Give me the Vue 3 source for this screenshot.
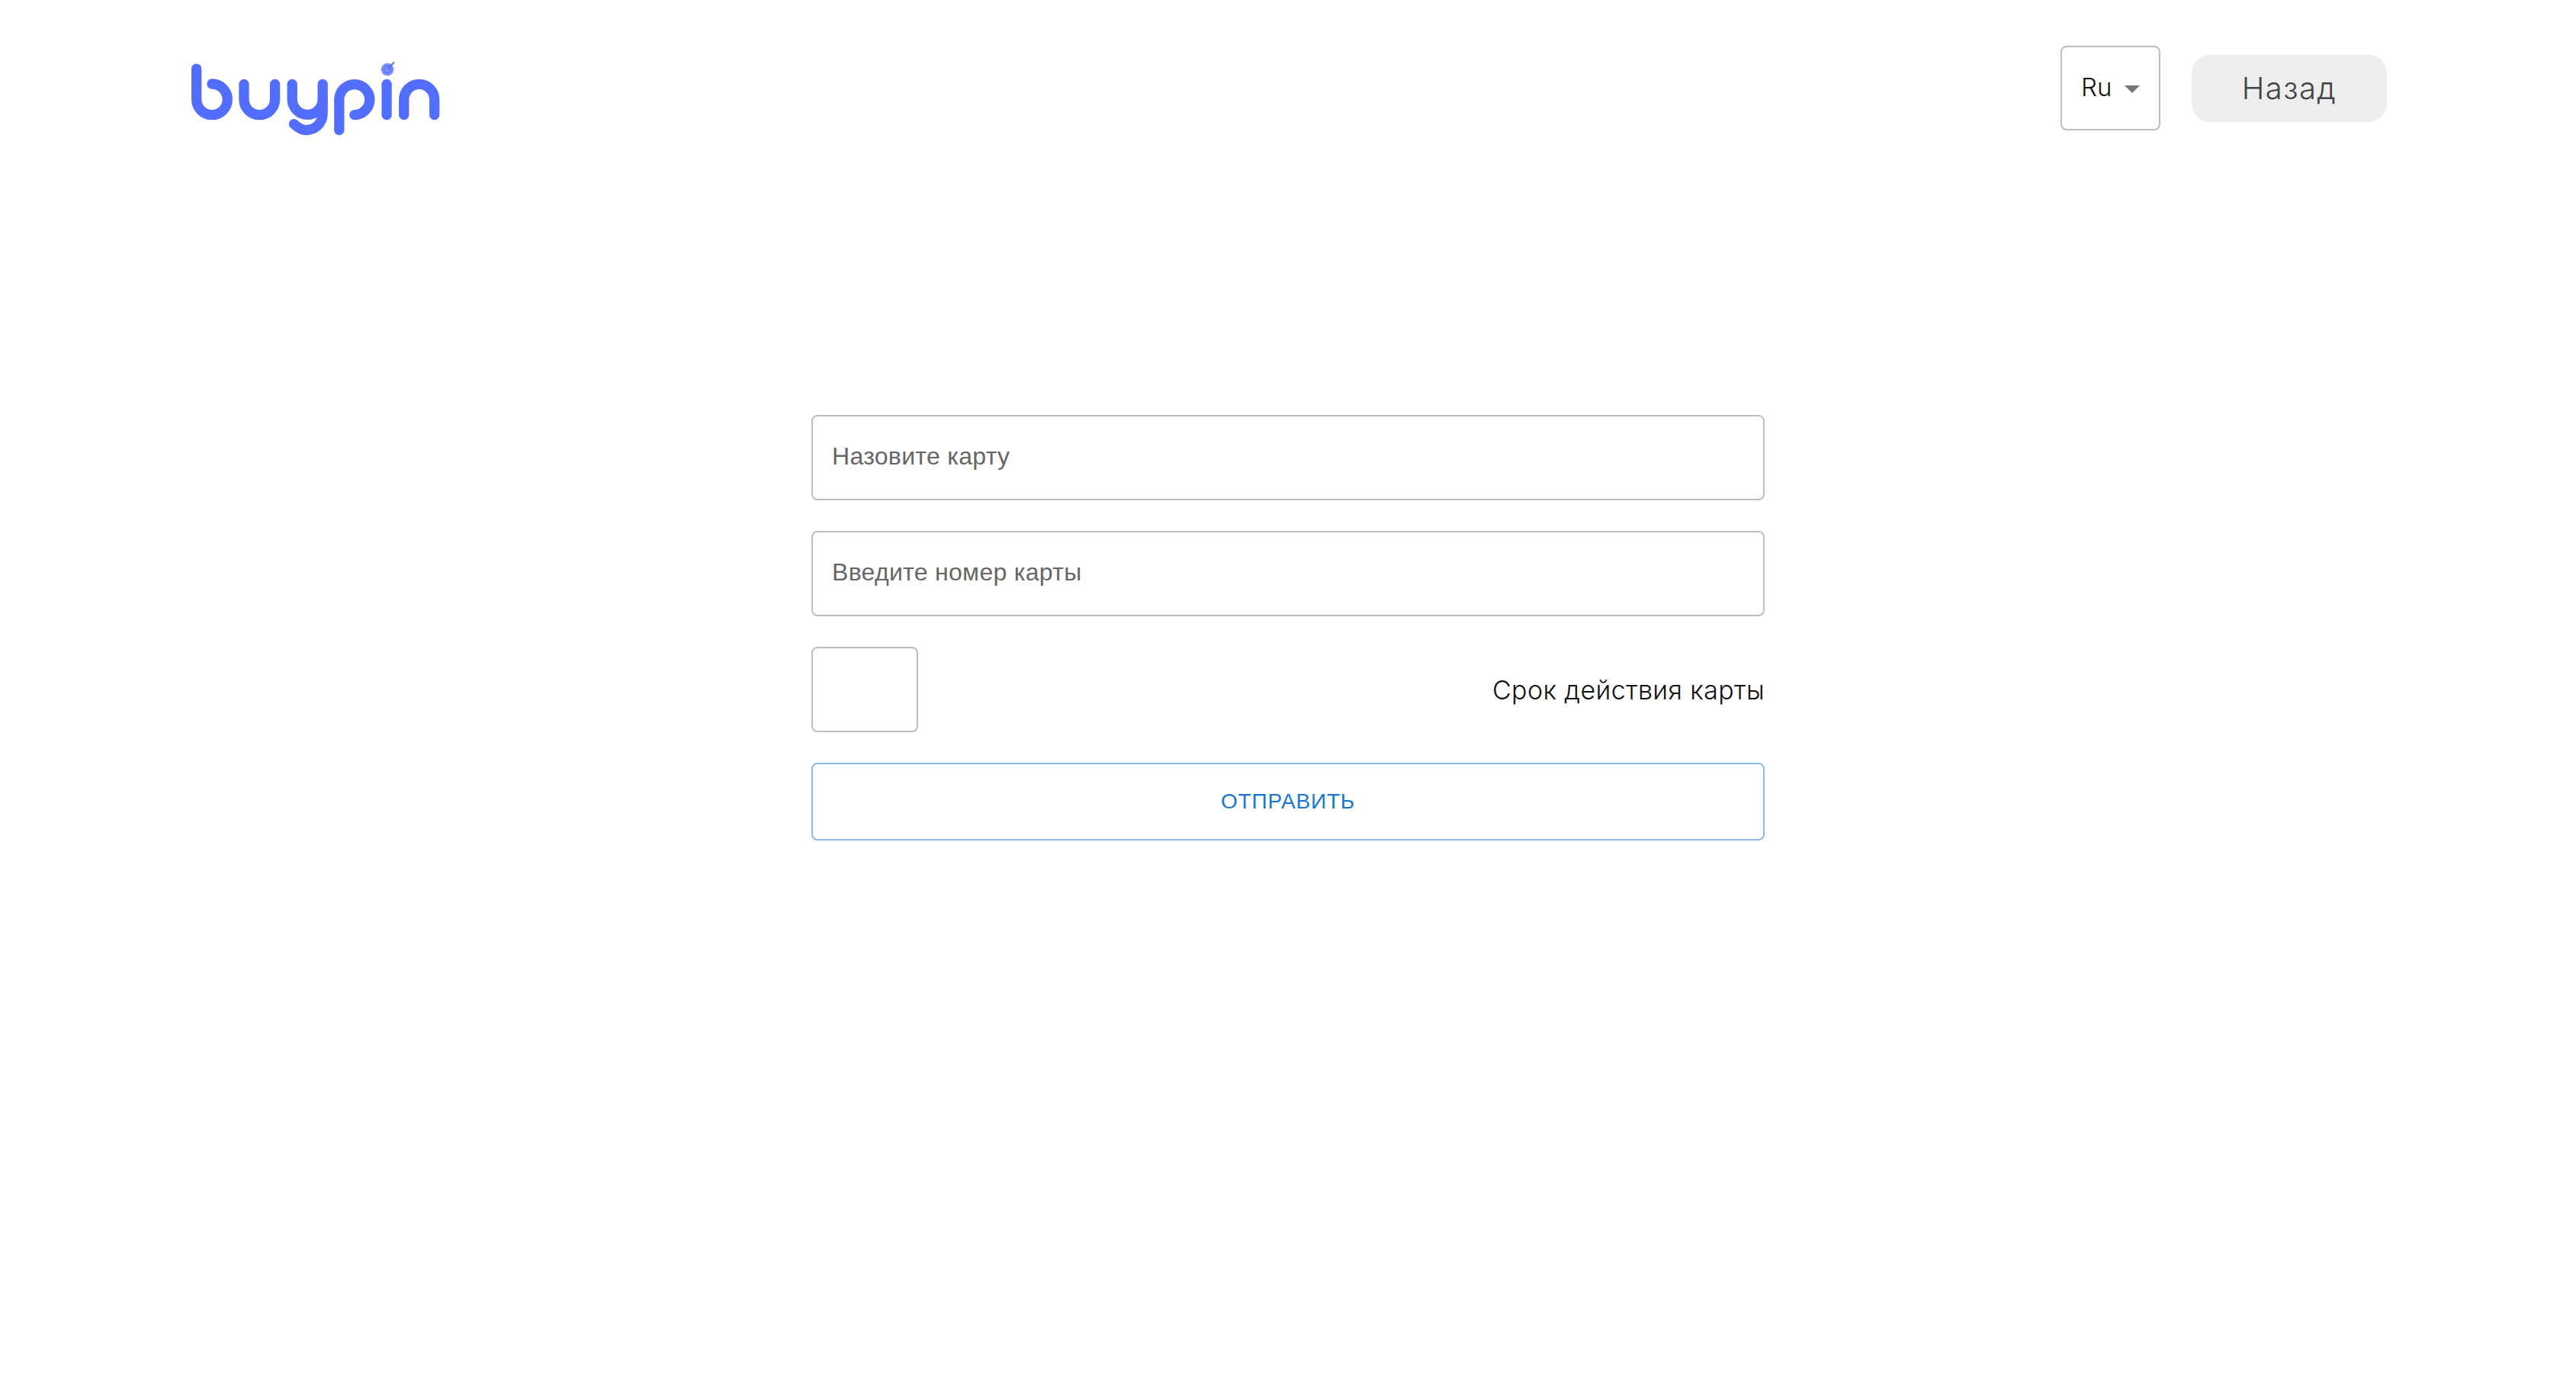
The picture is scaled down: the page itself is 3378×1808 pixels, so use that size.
<template>
  <div class="page">
    <header class="topbar">
      <svg class="logo" viewBox="90 90 985 300" fill="none" stroke="#536dfe" stroke-width="40" stroke-linecap="round">
        <path d="M113 120V241A61 61 0 1 0 174 180" />
        <path d="M300 181V241A61 61 0 0 0 422 241V181" />
        <path d="M490 181V241A60 60 0 0 0 610 241V181" />
        <path d="M610 241V295C610 340 575 362 545 362C525 362 510 350 497 338" />
        <path d="M675 362V241A60 60 0 1 1 735 302" />
        <path d="M862 181V302" />
        <path d="M930 302V241A60 60 0 0 1 1050 241V302" />
        <circle cx="865" cy="123" r="25" fill="#7f91fb" stroke="none" />
        <circle cx="865" cy="123" r="14" stroke="#536dfe" stroke-width="4" />
        <path d="M868 120L890 96" stroke-width="6" />
      </svg>
      <div class="actions">
        <div class="lang">
          <span>Ru</span>
          <span class="caret"></span>
        </div>
        <button class="back" type="button">Назад</button>
      </div>
    </header>

    <form class="card-form" @submit.prevent>
      <input class="field" type="text" placeholder="Назовите карту" />
      <input class="field" type="text" placeholder="Введите номер карты" />
      <div class="expiry">
        <input class="field field-small" type="text" />
        <span class="expiry-label">Срок действия карты</span>
      </div>
      <button class="submit" type="submit">Отправить</button>
    </form>
  </div>
</template>

<script setup>
</script>

<style>
body {
  background: #fff;
}
</style>

<style scoped>
.page {
  min-height: 1808px;
  background: #fff;
  font-family: Roboto, "Liberation Sans", sans-serif;
}

.topbar {
  display: flex;
  justify-content: space-between;
  align-items: flex-start;
  padding: 60px 248px 0 250px;
}

.logo {
  width: 328px;
  height: 100px;
  margin-top: 20px;
  filter: blur(0.6px);
}

.actions {
  display: flex;
  align-items: center;
  gap: 41px;
}

.lang {
  box-sizing: border-box;
  width: 131px;
  height: 111px;
  padding: 0 0 3px 25px;
  display: flex;
  align-items: center;
  gap: 17px;
  border: 2px solid #bdbdbd;
  border-radius: 8px;
  font-family: Inter, sans-serif;
  font-size: 33px;
  font-weight: 300;
  color: #111;
}

.caret {
  width: 0;
  height: 0;
  border-left: 10px solid transparent;
  border-right: 10px solid transparent;
  border-top: 10px solid #757575;
  margin-top: 5px;
}

.back {
  width: 256px;
  height: 88px;
  border: none;
  border-radius: 24px;
  background: #eee;
  color: #444;
  font-family: Inter, sans-serif;
  font-size: 40px;
  font-weight: 300;
  letter-spacing: 1.4px;
}

.card-form {
  width: 1250px;
  margin: 364px auto 0;
  display: flex;
  flex-direction: column;
  gap: 40px;
}

.field {
  box-sizing: border-box;
  width: 100%;
  height: 112px;
  padding: 0 25px 3px;
  border: 2px solid #bdbdbd;
  border-radius: 8px;
  outline: none;
  background: #fff;
  font-family: "Liberation Sans", Roboto, sans-serif;
  font-size: 32px;
  letter-spacing: 0.3px;
  color: #212121;
}

.field::placeholder {
  color: #666;
  opacity: 1;
}

.expiry {
  display: flex;
  justify-content: space-between;
  align-items: center;
}

.field-small {
  width: 140px;
}

.expiry-label {
  font-family: Inter, sans-serif;
  font-size: 34px;
  font-weight: 300;
  letter-spacing: 0.35px;
  color: #111;
}

.submit {
  height: 102px;
  border: 2px solid #8ab8e8;
  border-radius: 8px;
  background: #fff;
  color: #1976d2;
  font-family: "Liberation Sans", Roboto, sans-serif;
  font-size: 28px;
  letter-spacing: 0.8px;
  text-transform: uppercase;
}
</style>
